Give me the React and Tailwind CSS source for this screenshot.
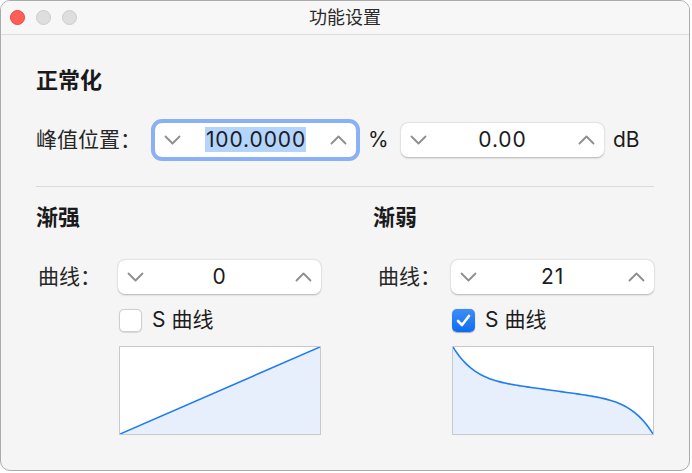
import React from 'react';

const Chevron = ({ up }) => (
  <svg width="17" height="10" viewBox="0 0 17 10" className="shrink-0">
    <polyline
      points={up ? '1.5,8.5 8.5,1.5 15.5,8.5' : '1.5,1.5 8.5,8.5 15.5,1.5'}
      fill="none"
      stroke="#8e8e8e"
      strokeWidth="1.8"
      strokeLinecap="round"
      strokeLinejoin="round"
    />
  </svg>
);

const Stepper = ({ value, focused }) => (
  <div
    className={`flex h-[34px] shrink-0 items-center justify-between rounded-[7px] bg-white px-[9px] ${
      focused
        ? 'w-[201px] ring-4 ring-[#8ab0f6]'
        : 'w-[203px] shadow-[0_0.5px_2px_rgba(0,0,0,0.28)]'
    }`}
  >
    <Chevron />
    <span className="text-[21px] leading-[26px] tracking-[0.9px] text-[#1c1c1c]">
      {focused ? <span className="bg-[#b3d4fc] pl-[1px]">{value}</span> : value}
    </span>
    <Chevron up />
  </div>
);

const Checkbox = ({ checked }) =>
  checked ? (
    <div className="flex h-[23px] w-[23px] shrink-0 items-center justify-center rounded-[5px] bg-gradient-to-b from-[#3b8ef8] to-[#0a6cf0] shadow-[0_0.5px_1px_rgba(0,0,0,0.3)]">
      <svg width="17" height="17" viewBox="0 0 17 17">
        <polyline points="3,9 7,13 14,4" fill="none" stroke="white" strokeWidth="2.6" strokeLinecap="round" strokeLinejoin="round" />
      </svg>
    </div>
  ) : (
    <div className="h-[23px] w-[23px] shrink-0 rounded-[5px] border border-[#cfcfcf] bg-white shadow-[0_0.5px_1px_rgba(0,0,0,0.12)]" />
  );

// inverse S curve for the fade-out graph
const sCurve = () => {
  const pts = [];
  for (let x = 0; x <= 200; x += 2) {
    const t = (x - 100) / 100;
    const g = 0.32 * t + 0.68 * Math.pow(t, 5);
    pts.push(`${x},${(44 + 44 * g).toFixed(2)}`);
  }
  return pts;
};

const Graph = ({ sShape }) => {
  const pts = sShape ? sCurve() : ['0,88', '200,0'];
  const line = 'M' + pts.join(' L');
  return (
    <div className="h-[89px] w-[202px] border-[1.5px] border-[#c9c9c9] bg-white">
      <svg width="100%" height="100%" viewBox="0 0 200 88" preserveAspectRatio="none" className="block">
        <path d={`${line} L200,88 L0,88 Z`} fill="#e7effd" />
        <path d={line} fill="none" stroke="#1d7cf2" strokeWidth="1.6" vectorEffect="non-scaling-stroke" />
      </svg>
    </div>
  );
};

const FadeColumn = ({ title, value, checked, sShape, labelClass, indentClass, widthClass }) => (
  <div className={`flex shrink-0 flex-col ${widthClass}`}>
    <h2 className="text-[22px] font-bold leading-[24px] text-[#1a1a1a]">{title}</h2>
    <div className="mt-[31px] flex items-center">
      <span className={`text-[21px] leading-[24px] text-[#262626] ${labelClass}`}>曲线：</span>
      <Stepper value={value} />
    </div>
    <div className={`mt-[14px] flex h-[24px] items-center gap-[10px] ${indentClass}`}>
      <Checkbox checked={checked} />
      <span className="text-[21px] leading-[24px] text-[#1c1c1c]">S 曲线</span>
    </div>
    <div className={`mt-[14px] ${indentClass}`}>
      <Graph sShape={sShape} />
    </div>
  </div>
);

const App = () => {
  return (
    <div className="min-h-screen bg-white font-['Inter','Noto_Sans_CJK_SC',sans-serif]">
      <div className="flex h-[471px] w-[690px] flex-col overflow-hidden rounded-[10px] border border-[#ababab] bg-[#f5f5f5]">
        {/* Title bar */}
        <div className="relative flex h-[34px] shrink-0 items-center border-b border-[#dcdcdc] bg-[#f7f7f7]">
          <div className="flex items-center gap-[11px] pl-[9px]">
            <div className="h-[15px] w-[15px] rounded-full border border-[#e2463f] bg-[#ff5f57]" />
            <div className="h-[15px] w-[15px] rounded-full border border-[#cbcbcb] bg-[#dedede]" />
            <div className="h-[15px] w-[15px] rounded-full border border-[#cbcbcb] bg-[#dedede]" />
          </div>
          <div className="absolute inset-0 flex items-center justify-center text-[18px] text-[#2a2a2a]">功能设置</div>
        </div>

        {/* Content */}
        <div className="flex flex-col px-[35px] pt-[33px]">
          <h2 className="text-[22px] font-bold leading-[24px] text-[#1a1a1a]">正常化</h2>

          <div className="mt-[31px] flex items-center">
            <span className="w-[119px] shrink-0 text-[21px] leading-[24px] text-[#262626]">峰值位置：</span>
            <Stepper value="100.0000" focused />
            <span className="w-[45px] shrink-0 pl-[12px] text-[21px] leading-[24px] text-[#1c1c1c]">%</span>
            <Stepper value="0.00" />
            <span className="pl-[9px] text-[21px] leading-[24px] text-[#1c1c1c]">dB</span>
          </div>

          <div className="mt-[29px] h-px w-[618px] bg-[#dadada]" />

          <div className="mt-[18px] flex">
            <FadeColumn
              title="渐强"
              value="0"
              checked={false}
              sShape={false}
              widthClass="w-[337px]"
              labelClass="w-[82px] shrink-0 pl-[2px]"
              indentClass="ml-[83px]"
            />
            <FadeColumn
              title="渐弱"
              value="21"
              checked
              sShape
              widthClass="w-[281px]"
              labelClass="w-[78px] shrink-0 pl-[5px]"
              indentClass="ml-[79px]"
            />
          </div>
        </div>
      </div>
    </div>
  );
};

export default App;
